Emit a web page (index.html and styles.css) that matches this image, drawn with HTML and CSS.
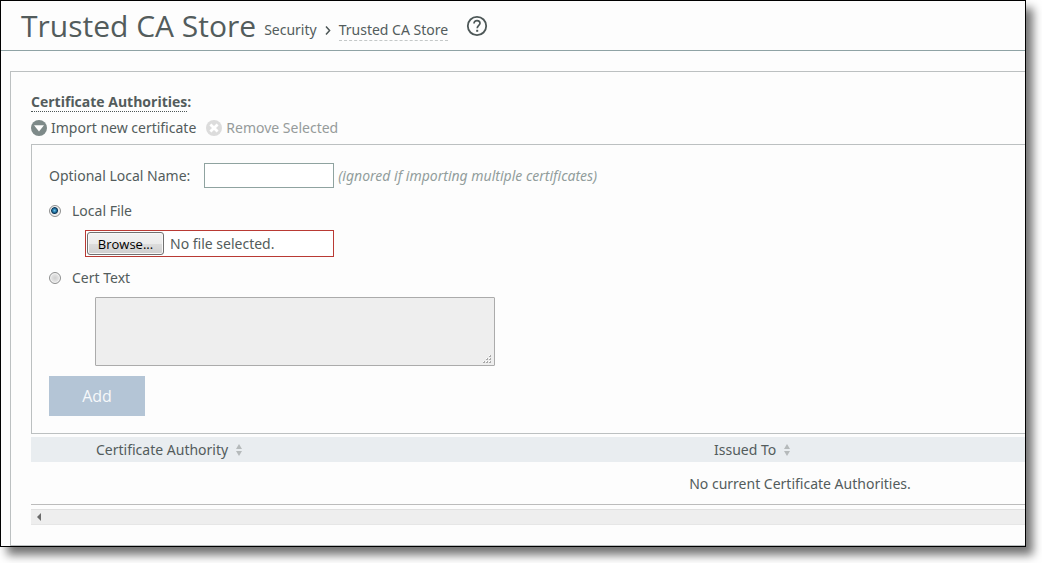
FILE: index.html
```html
<!DOCTYPE html>
<html lang="en">
<head>
    <meta charset="UTF-8">
    <meta name="viewport" content="width=device-width, initial-scale=1.0">
    <title>Trusted CA Store</title>
    <link rel="stylesheet" href="styles.css">
</head>
<body>
    <div class="window">
        <header class="page-header">
            <h1>Trusted CA Store</h1>
            <nav class="breadcrumb">
                <a href="#">Security</a>
                <svg class="crumb-arrow" width="6" height="9" viewBox="0 0 6 9"><path d="M1 0.5L4.6 4.5L1 8.5" fill="none" stroke="#4d5757" stroke-width="1.5"/></svg>
                <a href="#" class="current">Trusted CA Store</a>
            </nav>
            <a href="#" class="help" aria-label="Help">
                <svg width="22" height="22" viewBox="0 0 22 22" fill="none" stroke="#4d5757">
                    <circle cx="11" cy="11" r="9.2" stroke-width="1.8"/>
                    <path d="M8 8.6C8 6.6 9.3 5.6 11 5.6S14 6.7 14 8.3C14 10.3 11.2 10.6 11.2 13.2" stroke-width="1.7"/>
                    <path d="M11.2 14.8v2" stroke-width="2"/>
                </svg>
            </a>
        </header>

        <main class="panel">
            <h2><span>Certificate Authorities</span>:</h2>

            <div class="actions">
                <button type="button" class="action">
                    <svg width="16" height="16" viewBox="0 0 16 16"><circle cx="8" cy="8" r="8" fill="#7e8a89"/><path d="M3 5.3h10L8 11.5z" fill="#fff"/></svg>
                    Import new certificate
                </button>
                <button type="button" class="action" disabled>
                    <svg width="16" height="16" viewBox="0 0 16 16"><circle cx="8" cy="8" r="8" fill="#dcdcdc"/><path d="M4.4 4.4l7.2 7.2M11.6 4.4l-7.2 7.2" stroke="#fff" stroke-width="2.8"/></svg>
                    Remove Selected
                </button>
            </div>

            <form class="import-form">
                <div class="name-row">
                    <label for="localName">Optional Local Name:</label>
                    <input type="text" id="localName" class="text-input">
                    <span class="hint">(ignored if importing multiple certificates)</span>
                </div>

                <div class="radio-row">
                    <input type="radio" name="source" id="localFile" checked>
                    <label for="localFile">Local File</label>
                </div>
                <div class="file-box">
                    <button type="button" class="browse" tabindex="-1">Browse...</button>
                    <span>No file selected.</span>
                    <input type="file" aria-label="Local file">
                </div>

                <div class="radio-row">
                    <input type="radio" name="source" id="certText">
                    <label for="certText">Cert Text</label>
                </div>
                <div class="cert-box">
                    <textarea aria-label="Certificate text" disabled></textarea>
                    <svg class="grip" width="8" height="8" viewBox="0 0 8 8" fill="#aaa"><path d="M6 0h2v2H6zM3 3h2v2H3zM6 3h2v2H6zM0 6h2v2H0zM3 6h2v2H3zM6 6h2v2H6z"/><path d="M6 0h1v1H6zM3 3h1v1H3zM6 3h1v1H6zM0 6h1v1H0zM3 6h1v1H3zM6 6h1v1H6z" fill="#fff"/></svg>
                </div>

                <button type="submit" class="add-btn" disabled>Add</button>
            </form>

            <div class="table-wrap">
                <table>
                    <colgroup>
                        <col class="col-check">
                        <col class="col-authority">
                        <col>
                    </colgroup>
                    <thead>
                        <tr>
                            <th></th>
                            <th>Certificate Authority <svg class="sort" width="6" height="12" viewBox="0 0 6 12" fill="#b5babb"><path d="M0 5L3 0l3 5zM0 7h6l-3 5z"/></svg></th>
                            <th>Issued To <svg class="sort" width="6" height="12" viewBox="0 0 6 12" fill="#b5babb"><path d="M0 5L3 0l3 5zM0 7h6l-3 5z"/></svg></th>
                        </tr>
                    </thead>
                    <tbody>
                        <tr>
                            <td colspan="3">No current Certificate Authorities.</td>
                        </tr>
                    </tbody>
                </table>
            </div>
            <div class="scrollbar">
                <svg width="4" height="8" viewBox="0 0 4 8"><path d="M4 0v8L0 4z" fill="#6b6b6b"/></svg>
            </div>
        </main>
    </div>
</body>
</html>
```
FILE: styles.css
```css
* {
    box-sizing: border-box;
}

body {
    margin: 0;
    background: #fff;
    color: #535c5c;
    font-family: "Noto Sans", "Open Sans", sans-serif;
    font-size: 14px;
    line-height: 20px;
    overflow: hidden;
}

button, input, textarea {
    margin: 0;
    font: inherit;
    color: inherit;
}

.window {
    margin: 0 16px 16px 0;
    border: 1px solid #000;
    background: #fdfdfd;
    box-shadow: 7px 8px 9px rgba(0, 0, 0, 0.55);
}

/* header */
.page-header {
    display: flex;
    align-items: center;
    height: 50px;
    padding-left: 20px;
    border-bottom: 1px solid #8fa3a5;
}

h1, h2 {
    font-family: "Open Sans", "Noto Sans", sans-serif;
}

h1 {
    margin: 0;
    font-size: 30px;
    font-weight: normal;
    line-height: 48px;
}

.breadcrumb {
    display: flex;
    align-items: center;
    gap: 8px;
    margin: 10px 18px 0 8px;
}

.breadcrumb a {
    color: inherit;
    text-decoration: none;
    border-bottom: 1px solid transparent;
}

.breadcrumb .current {
    border-bottom: 1px dashed #c4c8c8;
}

.help {
    display: flex;
}

/* panel */
.panel {
    margin: 20px 0 0 9px;
    padding: 20px 0 20px 20px;
    border: 1px solid #bcc0c1;
    border-right: none;
}

h2 {
    margin: 0;
    font-size: 14px;
    line-height: 20px;
}

h2 span {
    display: inline-block;
    height: 20px;
    border-bottom: 1px dotted #4d5757;
}

.actions {
    display: flex;
    gap: 10px;
    margin: 6px 0;
}

.action {
    display: flex;
    align-items: center;
    gap: 4px;
    padding: 0;
    border: none;
    background: none;
}

.action:disabled {
    color: #969b9b;
}

/* import form */
.import-form {
    padding: 18px 0 17px 17px;
    border: 1px solid #bcc0c1;
    border-right: none;
}

.name-row {
    display: flex;
    align-items: center;
    margin-bottom: 13px;
}

.text-input {
    width: 130px;
    height: 25px;
    margin: 0 4px 0 14px;
    padding: 2px 4px;
    border: 1px solid #8fa3a0;
    background: #fff;
}

.hint {
    color: #929d9c;
    font-style: italic;
}

.radio-row {
    display: flex;
    align-items: center;
    gap: 11px;
}

.radio-row input {
    appearance: none;
    width: 12px;
    height: 12px;
    border: 1px solid #8e8f8f;
    border-radius: 50%;
    background: radial-gradient(#d0d0d0, #f4f4f4);
    box-shadow: inset 0 0 0 1px #f4f4f4;
}

.radio-row input:checked {
    background: radial-gradient(circle at 45% 45%, #6cc5ea 0, #1d6d9d 2px, #0d3553 3px, #e8e8e8 4px);
}

.file-box {
    position: relative;
    display: flex;
    align-items: center;
    gap: 6px;
    width: 249px;
    height: 27px;
    margin: 9px 0 11px 36px;
    padding: 1px;
    border: 1px solid #b93a34;
    background: #fff;
}

.file-box input {
    position: absolute;
    inset: 0;
    width: 100%;
    opacity: 0;
}

.browse {
    width: 77px;
    height: 23px;
    padding: 0;
    border: 1px solid #707070;
    border-radius: 3px;
    background: linear-gradient(#f2f2f2, #ebebeb 50%, #dddddd 50%, #cfcfcf);
    box-shadow: inset 0 0 0 1px #f8f8f8;
    color: #000;
    font-family: "Open Sans", sans-serif;
    font-size: 13px;
    line-height: 20px;
}

.cert-box {
    position: relative;
    width: 400px;
    margin: 9px 0 10px 46px;
}

textarea {
    display: block;
    width: 100%;
    height: 69px;
    border: 1px solid #ababab;
    border-radius: 1px;
    background: #eee;
    resize: none;
}

.grip {
    position: absolute;
    right: 4px;
    bottom: 3px;
}

.add-btn {
    display: block;
    width: 96px;
    height: 40px;
    border: none;
    background: #b4c5d6;
    color: #f7f9fb;
    font-family: "Open Sans", sans-serif;
    font-size: 16px;
}

/* certificate table */
.table-wrap {
    margin-top: 3px;
    overflow: hidden;
    border-bottom: 1px solid #bcbcbc;
}

table {
    width: 1538px;
    table-layout: fixed;
    border-collapse: collapse;
}

.col-check {
    width: 65px;
}

.col-authority {
    width: 618px;
}

th {
    height: 25px;
    padding: 0;
    background: #e9edf0;
    font-weight: normal;
    text-align: left;
}

.sort {
    margin-left: 4px;
    vertical-align: -1px;
}

td {
    height: 42px;
    padding: 1px 0 0;
    text-align: center;
}

.scrollbar {
    display: flex;
    align-items: center;
    height: 16px;
    margin-top: 4px;
    padding-left: 6px;
    border-top: 1px solid #e0e0e0;
    border-bottom: 1px solid #e6e6e6;
    background: #eee;
}
```
